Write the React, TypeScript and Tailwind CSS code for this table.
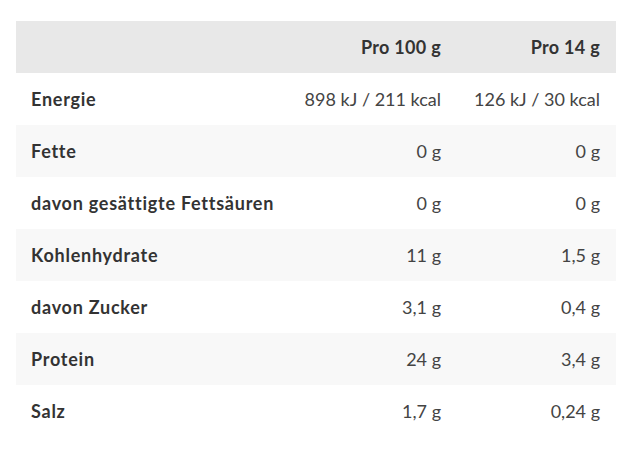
const rows = [
  { name: "Energie", a: "898 kJ / 211 kcal", b: "126 kJ / 30 kcal" },
  { name: "Fette", a: "0 g", b: "0 g" },
  { name: "davon gesättigte Fettsäuren", a: "0 g", b: "0 g" },
  { name: "Kohlenhydrate", a: "11 g", b: "1,5 g" },
  { name: "davon Zucker", a: "3,1 g", b: "0,4 g" },
  { name: "Protein", a: "24 g", b: "3,4 g" },
  { name: "Salz", a: "1,7 g", b: "0,24 g" },
];

export default function App() {
  return (
    <div className="bg-white w-[636px] h-[451px] px-4 pt-[21px] font-['Lato',sans-serif] text-[18px] text-[#333]">
      <table className="w-[600px] border-collapse">
        <thead>
          <tr className="bg-[#e8e8e8] h-[52px]">
            <th className="pl-[15px] text-left"></th>
            <th className="pr-4 text-right font-bold tracking-[0.3px] w-[160px]">Pro 100 g</th>
            <th className="pr-4 text-right font-bold tracking-[0.3px] w-[159px]">Pro 14 g</th>
          </tr>
        </thead>
        <tbody>
          {rows.map((row, i) => (
            <tr key={row.name} className={`h-[52px] ${i % 2 === 1 ? "bg-[#f8f8f8]" : "bg-white"}`}>
              <td className="pl-[15px] font-bold tracking-[0.75px]">{row.name}</td>
              <td className="pr-4 text-right text-[#444]">{row.a}</td>
              <td className="pr-4 text-right text-[#444]">{row.b}</td>
            </tr>
          ))}
        </tbody>
      </table>
    </div>
  );
}
